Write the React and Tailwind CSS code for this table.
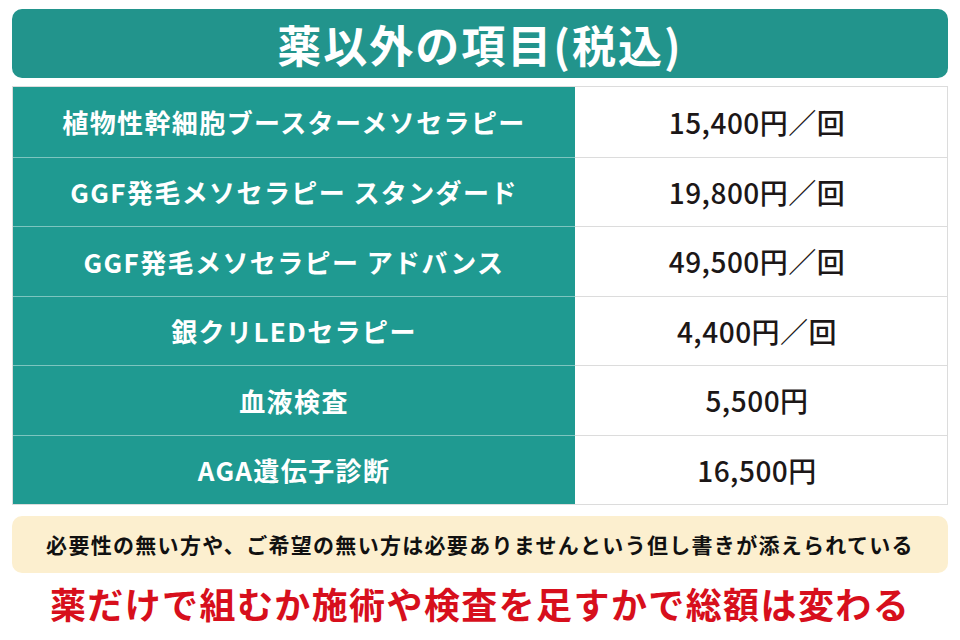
import React from "react";

const rows = [
  { name: "植物性幹細胞ブースターメソセラピー", price: "15,400円／回" },
  { name: "GGF発毛メソセラピー スタンダード", price: "19,800円／回" },
  { name: "GGF発毛メソセラピー アドバンス", price: "49,500円／回" },
  { name: "銀クリLEDセラピー", price: "4,400円／回" },
  { name: "血液検査", price: "5,500円" },
  { name: "AGA遺伝子診断", price: "16,500円" },
];

const App = () => {
  return (
    <div
      className="w-[960px] h-[640px] bg-white px-3 pt-[9px] flex flex-col"
      style={{ fontFamily: '"Noto Sans CJK JP", "Noto Sans", sans-serif' }}
    >
      {/* Title */}
      <div className="h-[69px] rounded-[10px] bg-[#22948c] flex items-center justify-center">
        <h1 className="text-white font-bold text-[44px] leading-none tracking-[2px]">
          薬以外の項目(税込)
        </h1>
      </div>

      {/* Price table */}
      <div className="mt-2 border border-[#dcdcdc]">
        {rows.map((row, i) => (
          <div
            key={row.name}
            className={`flex h-[69.5px] ${i > 0 ? "border-t border-[#dcdcdc]" : ""}`}
          >
            <div
              className={`w-[562px] bg-[#1f9a91] flex items-center justify-center text-white font-bold text-[26px] tracking-[1.4px] ${
                i > 0 ? "border-t border-[#7cc5bf] -mt-px" : ""
              }`}
            >
              {row.name}
            </div>
            <div className="flex-1 flex items-center justify-center text-[#1c1717] font-medium text-[28px] tracking-[0.5px] pr-2">
              {row.price}
            </div>
          </div>
        ))}
      </div>

      {/* Note */}
      <div className="mt-[11px] h-[57px] rounded-[10px] bg-[#fcefcf] flex items-center justify-center">
        <p className="text-[#111] font-bold text-[21px] tracking-[1.3px]">
          必要性の無い方や、ご希望の無い方は必要ありませんという但し書きが添えられている
        </p>
      </div>

      {/* Summary */}
      <p className="mt-[8px] text-center text-[#d70f1c] font-bold text-[36px] leading-[44px] tracking-[1.4px]">
        薬だけで組むか施術や検査を足すかで総額は変わる
      </p>
    </div>
  );
};

export default App;
